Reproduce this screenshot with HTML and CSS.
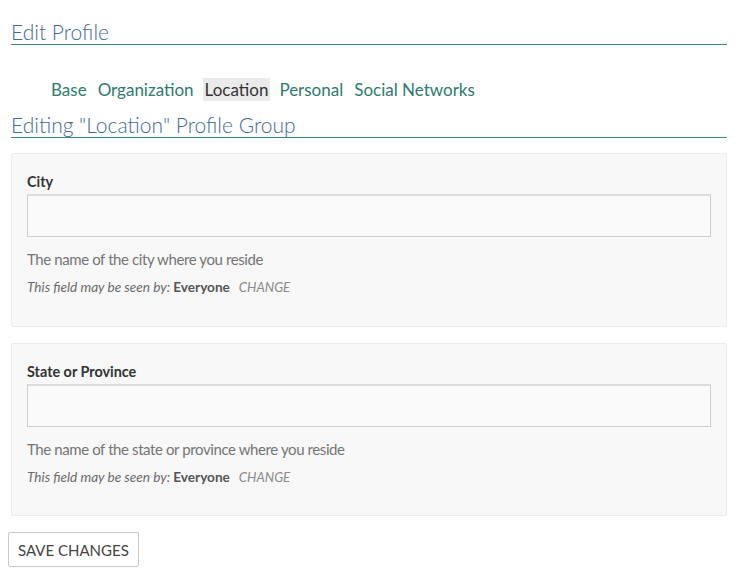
FILE: index.html
```html
<!DOCTYPE html>
<html lang="en">
<head>
<meta charset="utf-8">
<title>Edit Profile</title>
<link rel="stylesheet" href="styles.css">
</head>
<body>
<div class="page">
  <h1 class="title">Edit Profile</h1>
  <ul class="tabs">
    <li><a href="#">Base</a></li>
    <li><a href="#">Organization</a></li>
    <li class="current"><a href="#">Location</a></li>
    <li><a href="#">Personal</a></li>
    <li><a href="#">Social Networks</a></li>
  </ul>
  <h2 class="subtitle">Editing "Location" Profile Group</h2>
  <form class="form">
    <div class="field">
      <label class="label" for="city">City</label>
      <input class="input" id="city" type="text">
      <p class="desc">The name of the city where you reside</p>
      <p class="vis"><span class="vis-text">This field may be seen by: <strong>Everyone</strong></span><a class="vis-change" href="#">Change</a></p>
    </div>
    <div class="field">
      <label class="label" for="state">State or Province</label>
      <input class="input" id="state" type="text">
      <p class="desc">The name of the state or province where you reside</p>
      <p class="vis"><span class="vis-text">This field may be seen by: <strong>Everyone</strong></span><a class="vis-change" href="#">Change</a></p>
    </div>
  </form>
</div>
<button class="save" type="button">Save Changes</button>
</body>
</html>
```
FILE: styles.css
```css
html, body { margin: 0; padding: 0; background: #fff; }
body {
  padding: 0 8px;
  font-family: Lato, "Open Sans", sans-serif;
  color: #333;
}
.page { margin: 0 5px 0 3px; }
.title {
  margin: 0;
  padding-top: 20px;
  font-family: Lato, sans-serif;
  font-weight: 300;
  font-size: 21px;
  line-height: 24px;
  color: #456999;
  border-bottom: 1px solid #3f8a80;
}
.tabs {
  list-style: none;
  margin: 33px 0 0 0;
  padding: 0 0 0 38px;
  display: flex;
  gap: 7px;
  height: 23px;
}
.tabs li { display: flex; }
.tabs a {
  display: block;
  padding: 0 2px;
  font-size: 17px;
  line-height: 23px;
  color: #2e7a6d;
  text-decoration: none;
}
.tabs .current a { background: #ebebeb; color: #333; }
.subtitle {
  margin: 12px 0 0 0;
  font-family: Lato, sans-serif;
  font-weight: 300;
  font-size: 21px;
  line-height: 24px;
  color: #456999;
  border-bottom: 1px solid #3f8a80;
}
.form { margin-top: 15px; display: flex; flex-direction: column; gap: 16px; }
.field {
  background: #f8f8f8;
  border: 1px solid #ececec;
  border-radius: 2px;
  padding: 18px 15px 0 15px;
  height: 174px;
  box-sizing: border-box;
}
.field + .field { height: 173px; }
.label {
  display: block;
  font-weight: 700;
  font-size: 14.4px;
  line-height: 20px;
  color: #333;
}
.input {
  display: block;
  box-sizing: border-box;
  width: 100%;
  height: 43px;
  margin-top: 2px;
  background: #fafafa;
  border: 1px solid #cfcfcf;
  border-top: 2px solid #dcdcdc;
  outline: none;
}
.desc {
  margin: 12px 0 0 0;
  font-size: 15px;
  letter-spacing: -0.4px;
  line-height: 20px;
  color: #757575;
}
.vis {
  margin: 8px 0 0 0;
  font-size: 13.6px;
  line-height: 20px;
  color: #6a6a6a;
}
.vis-text { font-style: italic; }
.vis-text strong { font-style: normal; font-weight: 700; color: #555; }
.vis-change {
  margin-left: 9px;
  font-style: italic;
  font-size: 13.2px;
  text-transform: uppercase;
  color: #8a8a8a;
  text-decoration: none;
  font-weight: 400;
}
.save {
  display: block;
  margin-top: 16px;
  height: 35px;
  padding: 0 9px;
  background: #fff;
  border: 1px solid #cacaca;
  border-radius: 2px;
  font-family: Lato, sans-serif;
  font-size: 15px;
  text-transform: uppercase;
  color: #444;
  cursor: pointer;
}
```
